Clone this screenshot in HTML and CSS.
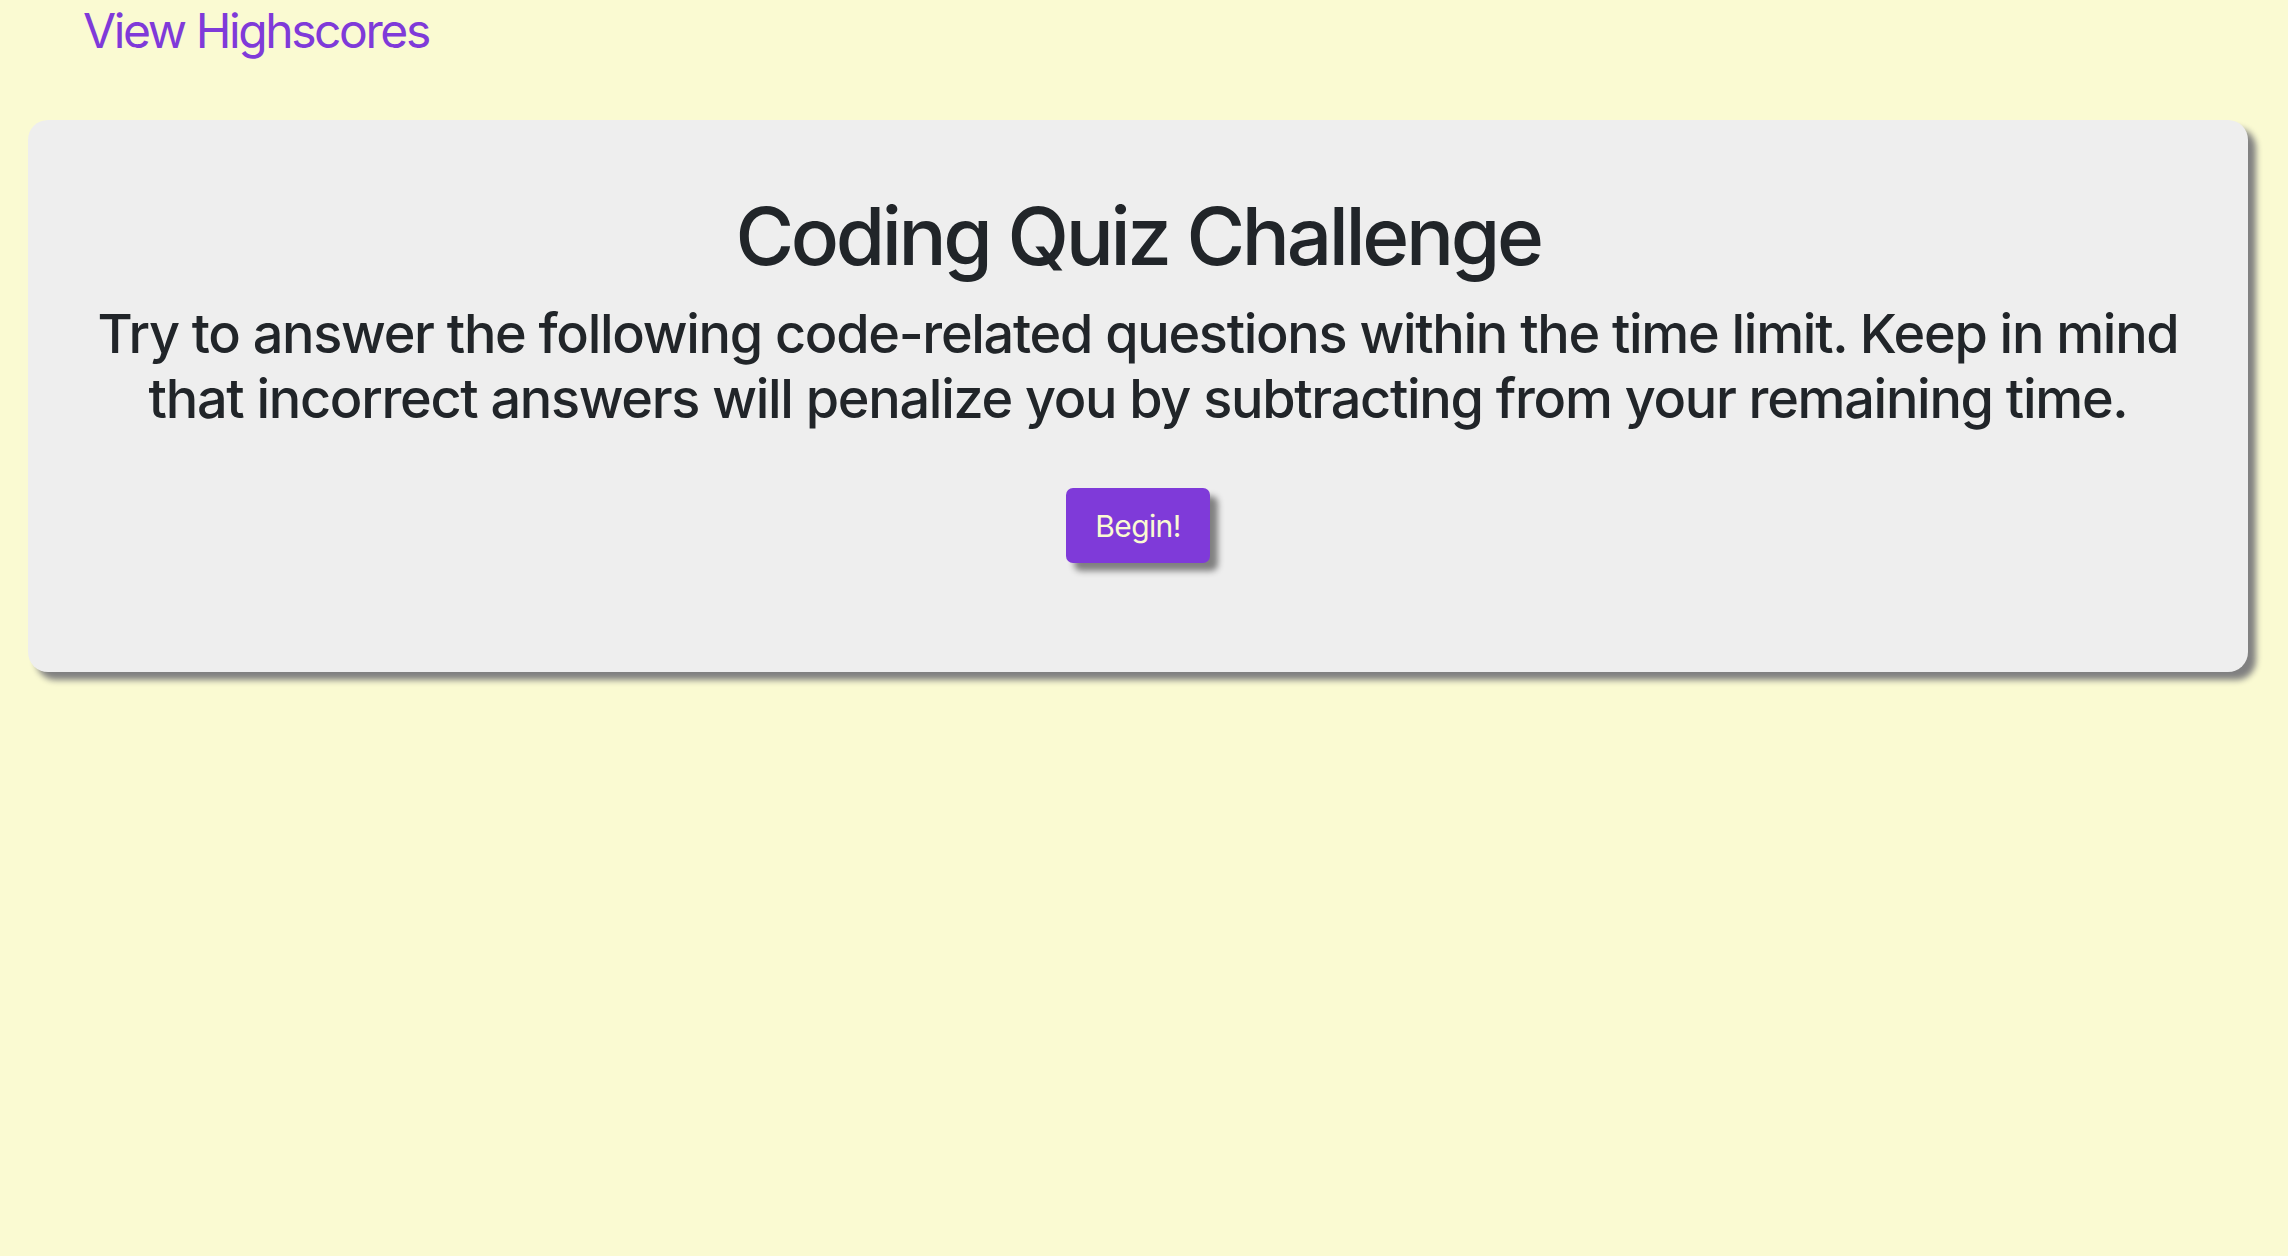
FILE: index.html
```html
<!DOCTYPE html>
<html lang="en">
<head>
<meta charset="utf-8">
<title>Coding Quiz Challenge</title>
<link rel="stylesheet" href="styles.css">
</head>
<body>
<header class="top-bar">
  <a class="highscores-link" href="#">View Highscores</a>
</header>
<main class="quiz-card">
  <h1 class="quiz-title">Coding Quiz Challenge</h1>
  <p class="quiz-intro">Try to answer the following code-related questions within the time limit. Keep in mind that incorrect answers will penalize you by subtracting from your remaining time.</p>
  <button class="begin-btn" type="button">Begin!</button>
</main>
</body>
</html>
```

FILE: styles.css
```css
html, body {
  margin: 0;
  padding: 0;
}

body {
  background: #fafad2;
  font-family: Inter, "Noto Sans", "Liberation Sans", sans-serif;
  color: #212529;
  min-height: 1256px;
}

.top-bar {
  height: 120px;
  padding-left: 83px;
  box-sizing: border-box;
}

.highscores-link {
  display: block;
  font-size: 48px;
  line-height: 56px;
  font-weight: 400;
  letter-spacing: -0.05em;
  color: #7f3ad9;
  text-decoration: none;
  padding-top: 3px;
}

.quiz-card {
  margin: 0 40px 0 28px;
  height: 552px;
  box-sizing: border-box;
  background: #eeeeee;
  border-radius: 20px;
  box-shadow: 8px 8px 6px #808080;
  display: flex;
  flex-direction: column;
  align-items: center;
  text-align: center;
  padding: 68px 60px 0;
}

.quiz-title {
  margin: 0;
  font-size: 80px;
  line-height: 96px;
  font-weight: 500;
  letter-spacing: -0.042em;
}

.quiz-intro {
  margin: 17px 0 0;
  font-size: 54px;
  line-height: 65px;
  font-weight: 500;
  letter-spacing: -0.024em;
}

.begin-btn {
  margin-top: 57px;
  width: 144px;
  height: 75px;
  border: none;
  border-radius: 7px;
  background: #7f3ad9;
  color: #fafad2;
  font-family: inherit;
  font-size: 30px;
  font-weight: 400;
  letter-spacing: -0.02em;
  box-shadow: 8px 8px 6px #808080;
  padding: 0;
}
```
